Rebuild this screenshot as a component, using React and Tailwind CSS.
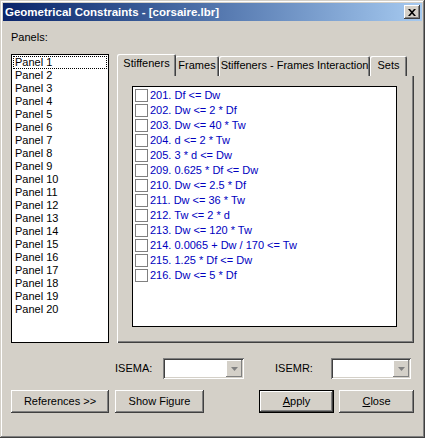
import React, { useState } from "react";

const raised =
  "bg-[#d4d0c8] shadow-[inset_-1px_-1px_#404040,inset_1px_1px_#ffffff,inset_-2px_-2px_#808080,inset_2px_2px_#d4d0c8]";
const sunken =
  "bg-white shadow-[inset_1px_1px_#808080,inset_-1px_-1px_#ffffff,inset_2px_2px_#404040,inset_-2px_-2px_#d4d0c8]";

const panels = Array.from({ length: 20 }, (_, i) => `Panel ${i + 1}`);

const constraints = [
  "201. Df <= Dw",
  "202. Dw <= 2 * Df",
  "203. Dw <= 40 * Tw",
  "204. d <= 2 * Tw",
  "205. 3 * d <= Dw",
  "209. 0.625 * Df <= Dw",
  "210. Dw <= 2.5 * Df",
  "211. Dw <= 36 * Tw",
  "212. Tw <= 2 * d",
  "213. Dw <= 120 * Tw",
  "214. 0.0065 + Dw / 170 <= Tw",
  "215. 1.25 * Df <= Dw",
  "216. Dw <= 5 * Df",
];

function Combo({ w }) {
  return (
    <div className={`${sunken} h-[21px] ${w} flex justify-end p-[2px]`}>
      <div className="w-[16px] h-[17px] bg-[#d4d0c8] shadow-[inset_-1px_-1px_#808080,inset_1px_1px_#ffffff] flex items-center justify-center">
        <svg width="7" height="4" viewBox="0 0 7 4">
          <path d="M0 0h7L3.5 4z" fill="#808080" />
        </svg>
      </div>
    </div>
  );
}

function Btn({ children, w, def }) {
  return (
    <button
      className={`h-[23px] ${w} ${
        def
          ? "bg-[#d4d0c8] border border-black shadow-[inset_-1px_-1px_#404040,inset_1px_1px_#ffffff,inset_-2px_-2px_#808080]"
          : raised
      } text-black`}
    >
      {children}
    </button>
  );
}

export default function App() {
  const [checked, setChecked] = useState({});
  const tabs = ["Stiffeners", "Frames", "Stiffeners - Frames Interaction", "Sets"];
  const tabW = ["w-[59px]", "w-[44px]", "w-[151px]", "w-[37px]"];

  return (
    <div
      className="w-[425px] h-[438px] bg-[#d4d0c8] p-[3px] shadow-[inset_-1px_-1px_#404040,inset_1px_1px_#d4d0c8,inset_-2px_-2px_#808080,inset_2px_2px_#ffffff] flex flex-col text-[11px] leading-[13px] text-black"
      style={{ fontFamily: '"Liberation Sans", Arial, sans-serif' }}
    >
      {/* title bar */}
      <div className="h-[18px] bg-gradient-to-r from-[#0a246a] to-[#a6caf0] flex items-center pl-[2px] pr-[2px]">
        <span className="flex-1 text-white font-bold text-[11.5px]">
          Geometrical Constraints - [corsaire.lbr]
        </span>
        <div className={`${raised} w-[16px] h-[14px] flex items-center justify-center`}>
          <svg width="8" height="7" viewBox="0 0 8 7">
            <path d="M0 0h2l2 2.2L6 0h2L5 3.5 8 7H6L4 4.8 2 7H0l3-3.5z" fill="#000" />
          </svg>
        </div>
      </div>

      <div className="flex-1 flex flex-col pl-[8px] pr-[8px]">
        <div className="mt-[10px] h-[13px]">Panels:</div>

        <div className="mt-[10px] flex gap-[8px]">
          {/* panels list */}
          <div className="w-[98px] h-[289px] bg-white border border-black py-[1px] px-[1px]">
            {panels.map((p, i) => (
              <div
                key={p}
                className={`h-[13px] pl-[2px] leading-[13px] ${
                  i === 0 ? "outline outline-1 outline-dotted outline-black -outline-offset-1" : ""
                }`}
              >
                {p}
              </div>
            ))}
          </div>

          {/* tab control */}
          <div className="w-[297px] flex flex-col">
            <div className="flex items-end h-[22px]">
              {tabs.map((t, i) => (
                <div
                  key={t}
                  className={`${tabW[i]} ${
                    i === 0 ? "h-[22px] z-10 -mr-[1px] pb-[3px]" : "h-[20px] pb-[1px]"
                  } bg-[#d4d0c8] rounded-t-[2px] shadow-[inset_1px_1px_#ffffff,inset_-1px_0_#404040,inset_-2px_0_#808080] flex items-center justify-center whitespace-nowrap`}
                >
                  {t}
                </div>
              ))}
            </div>
            <div className="h-[267px] bg-[#d4d0c8] shadow-[inset_1px_0_#ffffff,inset_-1px_-1px_#404040,inset_-2px_-2px_#808080] pt-[10px] pl-[15px] pr-[17px] pb-[16px]">
              <div className="h-full bg-white border border-black pt-[1px] pl-[2px]">
                {constraints.map((c, i) => (
                  <label key={c} className="flex items-center h-[15px] gap-[2px] cursor-default">
                    <span
                      onClick={() => setChecked({ ...checked, [i]: !checked[i] })}
                      className="w-[13px] h-[13px] border border-[#808080] bg-white flex items-center justify-center"
                    >
                      {checked[i] && (
                        <svg width="7" height="7" viewBox="0 0 7 7">
                          <path d="M0 3l2 2 5-5v2L2 7 0 5z" fill="#000" />
                        </svg>
                      )}
                    </span>
                    <span className="text-[#0000c0]">{c}</span>
                  </label>
                ))}
              </div>
            </div>
          </div>
        </div>

        {/* combos */}
        <div className="mt-[15px] flex items-center h-[21px]">
          <span className="ml-[104px] w-[48px]">ISEMA:</span>
          <Combo w="w-[81px]" />
          <span className="ml-[31px] w-[56px]">ISEMR:</span>
          <Combo w="w-[80px]" />
        </div>

        {/* buttons */}
        <div className="mt-[11px] flex">
          <Btn w="w-[98px]">References &gt;&gt;</Btn>
          <div className="ml-[6px]">
            <Btn w="w-[89px]">Show Figure</Btn>
          </div>
          <div className="ml-[55px]">
            <Btn w="w-[75px]" def>
              <span className="underline">A</span>pply
            </Btn>
          </div>
          <div className="ml-[5px]">
            <Btn w="w-[75px]">
              <span className="underline">C</span>lose
            </Btn>
          </div>
        </div>
      </div>
    </div>
  );
}
